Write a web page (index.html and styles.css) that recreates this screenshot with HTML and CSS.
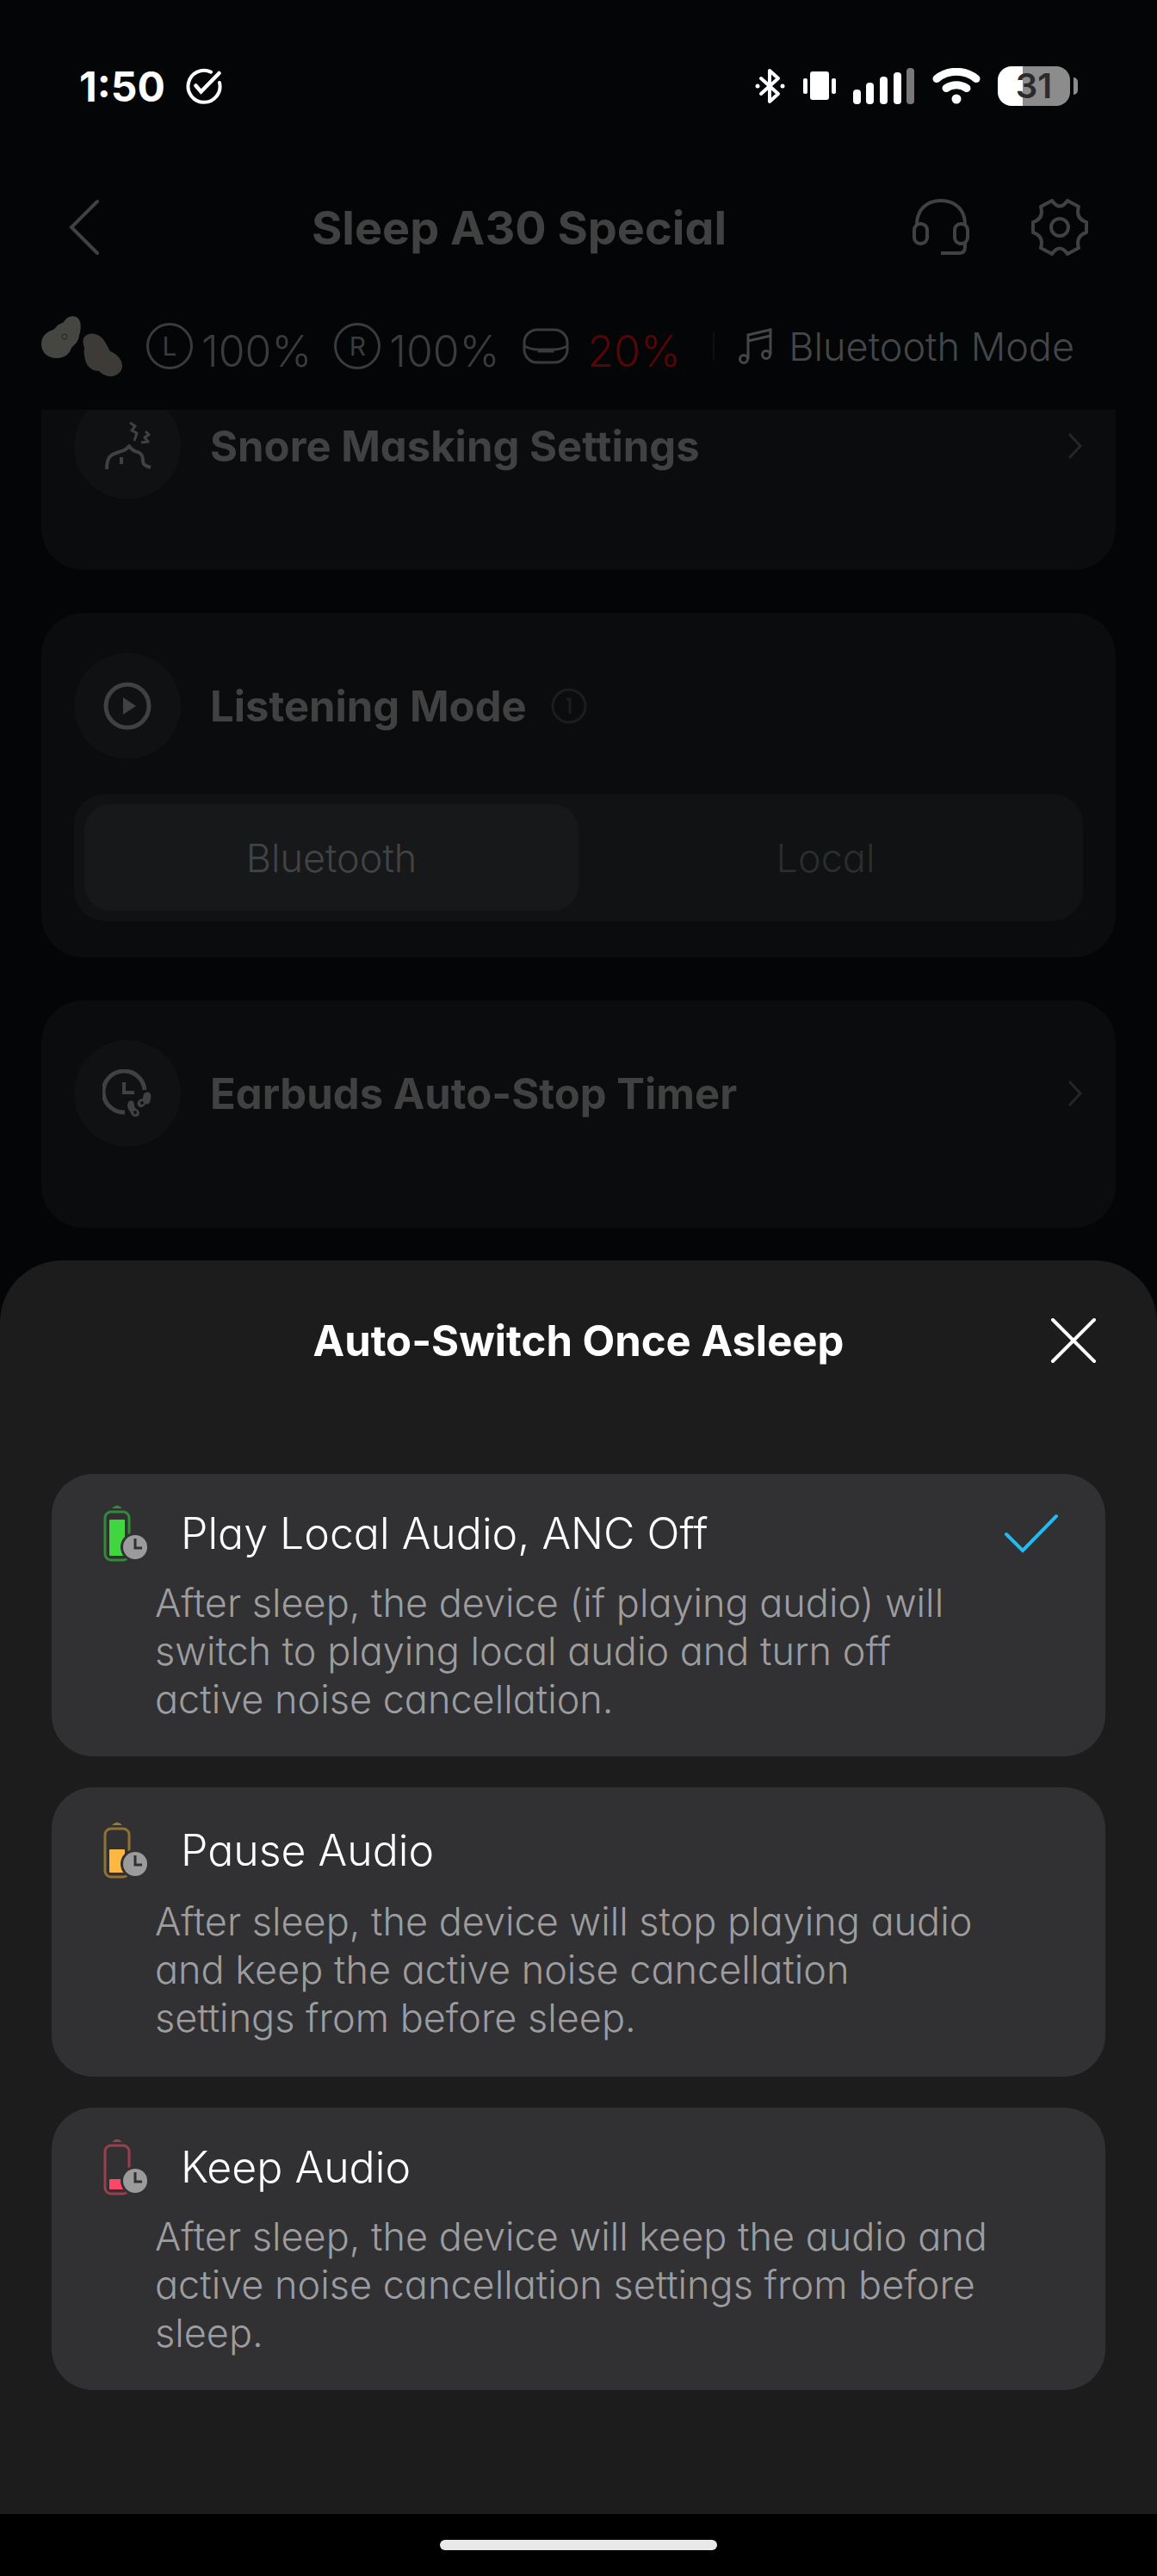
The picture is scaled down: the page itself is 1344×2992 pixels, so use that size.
FILE: index.html
```html
<!DOCTYPE html>
<html lang="en">
<head>
    <meta charset="UTF-8">
    <meta name="viewport" content="width=device-width, initial-scale=1">
    <title>Sleep A30 Special</title>
    <link rel="stylesheet" href="styles.css">
</head>
<body>
    <div class="status-bar">
        <span class="time">1:50</span>
        <svg class="status-check" width="42" height="42" viewBox="0 0 42 42" fill="none" stroke="#fff" stroke-width="4" stroke-linecap="round">
            <path d="M29 4.600A18.500 18.500 0 1 0 39 17"/>
            <path d="M11.500 20.500l6 7L38.500 6" stroke-width="4.500"/>
        </svg>
        <div class="status-icons">
            <svg width="36" height="42" viewBox="0 0 36 42" fill="none" stroke="#fff" stroke-width="4" stroke-linecap="round" stroke-linejoin="round">
                <path d="M7 12l20 18-10 9V3l10 9L7 30"/>
                <circle cx="3" cy="21" r="2.500" fill="#fff" stroke="none"/>
                <circle cx="32" cy="21" r="2.500" fill="#fff" stroke="none"/>
            </svg>
            <svg width="38" height="42" viewBox="0 0 38 42" fill="#fff">
                <rect x="8" y="4" width="22" height="33" rx="3"/>
                <rect x="0" y="12" width="5" height="18" rx="2"/>
                <rect x="33" y="12" width="5" height="18" rx="2"/>
            </svg>
            <svg width="72" height="42" viewBox="0 0 72 42" fill="#fff">
                <rect x="0" y="25" width="9" height="17" rx="4"/>
                <rect x="15" y="17" width="9" height="25" rx="4"/>
                <rect x="31" y="10" width="9" height="32" rx="4"/>
                <rect x="47" y="5" width="9" height="37" rx="4"/>
                <rect x="62" y="0" width="9" height="42" rx="4" fill="#7b7778"/>
            </svg>
            <svg width="56" height="42" viewBox="0 0 56 42" fill="none" stroke="#fff" stroke-width="9" stroke-linecap="round">
                <path d="M5 12.500C18 1.500 38 1.500 51 12.500"/>
                <path d="M16 23.500C23 18.500 33 18.500 40 23.500"/>
                <circle cx="28" cy="36" r="5.500" fill="#fff" stroke="none"/>
            </svg>
            <div class="battery">
                <span class="battery-body">31</span>
                <span class="battery-tip"></span>
            </div>
        </div>
    </div>

    <main class="screen">
        <header class="header">
            <button class="icon-btn" aria-label="Back">
                <svg width="36" height="66" viewBox="0 0 36 66" fill="none" stroke="currentColor" stroke-width="4" stroke-linecap="round">
                    <path d="M33 3L3 33l30 30"/>
                </svg>
            </button>
            <h1>Sleep A30 Special</h1>
            <button class="icon-btn" aria-label="Support">
                <svg width="66" height="66" viewBox="0 0 66 66" fill="none" stroke="currentColor" stroke-width="4">
                    <path d="M5 30C5 12 17 2 33 2s28 10 28 28"/>
                    <rect x="2" y="29" width="15" height="23" rx="7"/>
                    <rect x="49" y="29" width="15" height="23" rx="7"/>
                    <path d="M61 50v6q0 7-7 7H33"/>
                </svg>
            </button>
            <button class="icon-btn" aria-label="Settings">
                <svg width="66" height="66" viewBox="0 0 66 66" fill="none" stroke="currentColor" stroke-width="4" stroke-linejoin="round">
                    <path d="M24 2Q33 15 42 2L55 9Q51 23 64 27V39Q51 43 55 57L42 64Q33 51 24 64L11 57Q15 43 2 39V27Q15 23 11 9Z"/>
                    <circle cx="33" cy="33" r="10"/>
                </svg>
            </button>
        </header>

        <div class="device-row">
            <svg class="buds" width="94" height="72" viewBox="0 0 94 72">
                <path d="M26 8c4-7 12-9 17-4 4 5 3 13 1 20-1 7-5 10-9 14-2 7-8 12-17 12C7 50 0 43 0 34c0-8 4-13 11-16 4-1 5-3 7-5 2-3 5-3 8-5z" fill="#454542"/>
                <path d="M53 23c8-4 16 0 21 8 2 4 4 7 6 11 8 3 14 10 14 17 0 8-8 13-16 12-5-1-8-3-11-6-8 0-14-5-16-13-1-5-2-9-1-14-2-6-3-12 3-15z" fill="#3c3b38"/>
                <circle cx="27" cy="25" r="3" fill="none" stroke="#2a211c"/>
                <circle cx="66" cy="46" r="2" fill="#56322c"/>
            </svg>
            <div class="level">
                <span class="side">L</span>
                <span>100%</span>
            </div>
            <div class="level">
                <span class="side">R</span>
                <span>100%</span>
            </div>
            <div class="level level-case">
                <svg width="54" height="42" viewBox="0 0 54 42" fill="none" stroke="currentColor" stroke-width="3">
                    <rect x="2" y="2" width="50" height="38" rx="15"/>
                    <path d="M2 21q8 4 16 4h18q8 0 16-4M19 25v2h16v-2"/>
                </svg>
                <span class="low">20%</span>
            </div>
            <span class="divider"></span>
            <div class="mode">
                <svg width="40" height="42" viewBox="0 0 40 42" fill="none" stroke="currentColor" stroke-width="3">
                    <path d="M11 36V8l26-6v29M11 15l26-6"/>
                    <circle cx="6" cy="36" r="4.500"/>
                    <circle cx="32" cy="31" r="4.500"/>
                </svg>
                <span>Bluetooth Mode</span>
            </div>
        </div>

        <section class="card card-clipped">
            <div class="card-head">
                <span class="card-icon">
                    <svg width="56" height="56" viewBox="0 0 56 56" fill="none" stroke="currentColor" stroke-width="4" stroke-linejoin="round">
                        <path d="M4 55C4 41 8 38 18 35c7-2 9-3 12-7 3 5 6 6 10 7 5 2 6 5 6 10 0 5 3 6 9 8M21 41v8"/>
                        <path d="M31 1l6 4-4 5 6 3-3 9M49 11l4 4-5 3 4 5-8 1" stroke-width="3"/>
                    </svg>
                </span>
                <h2>Snore Masking Settings</h2>
                <svg class="chevron" width="18" height="32" viewBox="0 0 18 32" fill="none" stroke="#242627" stroke-width="3">
                    <path d="M2 2l13 14L2 30"/>
                </svg>
            </div>
        </section>

        <section class="card">
            <div class="card-head">
                <span class="card-icon">
                    <svg width="56" height="56" viewBox="0 0 56 56" fill="none" stroke="currentColor" stroke-width="5">
                        <circle cx="28" cy="28" r="25"/>
                        <path d="M23 18l15 10-15 10z" fill="currentColor" stroke="none"/>
                    </svg>
                </span>
                <h2>Listening Mode</h2>
                <svg class="info" width="42" height="42" viewBox="0 0 42 42" fill="none" stroke="#1b1d1e" stroke-width="3">
                    <circle cx="21" cy="21" r="19"/>
                    <path d="M18 13h4v17"/>
                </svg>
            </div>
            <div class="segment">
                <button class="segment-btn selected">Bluetooth</button>
                <button class="segment-btn">Local</button>
            </div>
        </section>

        <section class="card card-last">
            <div class="card-head">
                <span class="card-icon">
                    <svg width="58" height="56" viewBox="0 0 58 56" fill="none" stroke="currentColor" stroke-width="5">
                        <path d="M49 24A24 24 0 1 0 26 50"/>
                        <path d="M25 15v12h12" stroke-width="4"/>
                        <path d="M50 27c6-2 7 3 6 7 0 4-3 8-6 6-2 5-7 5-9 2-2-5 3-8 6-8 0-3 1-6 3-7zM31 37c3-2 6 0 6 4 0 3 1 4 4 6 4 4 1 9-4 8-3-1-4-4-5-6-3-3-4-9-1-12z" fill="currentColor" stroke="none"/>
                        <circle cx="46" cy="39" r="2" fill="#111213" stroke="none"/>
                        <circle cx="38" cy="50" r="2" fill="#111213" stroke="none"/>
                    </svg>
                </span>
                <h2>Earbuds Auto-Stop Timer</h2>
                <svg class="chevron" width="18" height="32" viewBox="0 0 18 32" fill="none" stroke="#242627" stroke-width="3">
                    <path d="M2 2l13 14L2 30"/>
                </svg>
            </div>
        </section>
    </main>

    <form class="sheet">
        <div class="sheet-head">
            <h2>Auto-Switch Once Asleep</h2>
            <button type="button" class="close" aria-label="Close">
                <svg width="54" height="54" viewBox="0 0 54 54" fill="none" stroke="#fff" stroke-width="4" stroke-linecap="round">
                    <path d="M3 3l48 48M51 3L3 51"/>
                </svg>
            </button>
        </div>

        <label class="option">
            <input type="radio" name="asleep" value="local" checked>
            <span class="option-head">
                <svg class="option-icon" width="52" height="66" viewBox="0 0 52 66">
                    <path d="M10 4q6-7 12 0z" fill="#338a38"/>
                    <rect x="2" y="8" width="28" height="56" rx="7" fill="none" stroke="#338a38" stroke-width="3"/>
                    <rect x="7" y="17" width="18" height="42" rx="1" fill="#3fd63f"/>
                    <circle cx="37" cy="49" r="17" fill="#313133"/>
                    <circle cx="37" cy="49" r="14" fill="#9b9b9c"/>
                    <path d="M37 39v11h8" fill="none" stroke="#313133" stroke-width="3"/>
                </svg>
                <span class="option-title">Play Local Audio, ANC Off</span>
                <svg class="tick" width="64" height="46" viewBox="0 0 64 46" fill="none" stroke="#1cbcf4" stroke-width="4" stroke-linecap="round">
                    <path d="M3 24l19 19L61 3"/>
                </svg>
            </span>
            <span class="option-text">After sleep, the device (if playing audio) will switch to playing local audio and turn off active noise cancellation.</span>
        </label>

        <label class="option option-roomy">
            <input type="radio" name="asleep" value="pause">
            <span class="option-head">
                <svg class="option-icon" width="52" height="66" viewBox="0 0 52 66">
                    <path d="M10 4q6-7 12 0z" fill="#8f7c3a"/>
                    <rect x="2" y="8" width="28" height="56" rx="7" fill="none" stroke="#917234" stroke-width="3"/>
                    <rect x="7" y="32" width="18" height="27" rx="1" fill="#ffb743"/>
                    <circle cx="37" cy="49" r="17" fill="#313133"/>
                    <circle cx="37" cy="49" r="14" fill="#9b9b9c"/>
                    <path d="M37 39v11h8" fill="none" stroke="#313133" stroke-width="3"/>
                </svg>
                <span class="option-title">Pause Audio</span>
                <svg class="tick" width="64" height="46" viewBox="0 0 64 46" fill="none" stroke="#1cbcf4" stroke-width="4" stroke-linecap="round">
                    <path d="M3 24l19 19L61 3"/>
                </svg>
            </span>
            <span class="option-text">After sleep, the device will stop playing audio and keep the active noise cancellation settings from before sleep.</span>
        </label>

        <label class="option">
            <input type="radio" name="asleep" value="keep">
            <span class="option-head">
                <svg class="option-icon" width="52" height="66" viewBox="0 0 52 66">
                    <path d="M10 4q6-7 12 0z" fill="#99404f"/>
                    <rect x="2" y="8" width="28" height="56" rx="7" fill="none" stroke="#99404f" stroke-width="3"/>
                    <rect x="7" y="47" width="18" height="12" rx="1" fill="#ff4766"/>
                    <circle cx="37" cy="49" r="17" fill="#313133"/>
                    <circle cx="37" cy="49" r="14" fill="#9b9b9c"/>
                    <path d="M37 39v11h8" fill="none" stroke="#313133" stroke-width="3"/>
                </svg>
                <span class="option-title">Keep Audio</span>
                <svg class="tick" width="64" height="46" viewBox="0 0 64 46" fill="none" stroke="#1cbcf4" stroke-width="4" stroke-linecap="round">
                    <path d="M3 24l19 19L61 3"/>
                </svg>
            </span>
            <span class="option-text">After sleep, the device will keep the audio and active noise cancellation settings from before sleep.</span>
        </label>
    </form>

    <div class="nav-bar"><span class="home-bar"></span></div>
</body>
</html>
```
FILE: styles.css
```css
* {
    box-sizing: border-box;
}

body {
    margin: 0;
    min-height: 100vh;
    display: flex;
    flex-direction: column;
    background-color: #030506;
    color: #fff;
    font-family: Inter, "Open Sans", sans-serif;
    /* single-storey a */
    font-feature-settings: "cv11";
}

h1,
h2 {
    margin: 0;
    font-weight: 700;
}

button {
    padding: 0;
    border: none;
    background: none;
    color: inherit;
    font: inherit;
    font-feature-settings: inherit;
    cursor: pointer;
}

svg {
    display: block;
    flex-shrink: 0;
}

/* status bar */
.status-bar {
    display: flex;
    align-items: center;
    height: 200px;
    padding: 0 92px;
}

.time {
    font-size: 48px;
    font-weight: 700;
}

.status-check {
    margin-left: 24px;
}

.status-icons {
    display: flex;
    align-items: center;
    gap: 20px;
    margin-left: auto;
}

.battery {
    display: flex;
    align-items: center;
    gap: 4px;
}

.battery-body {
    width: 84px;
    border-radius: 16px;
    background: linear-gradient(90deg, #fff 34%, #8c8c8c 34%);
    color: #2b2b2b;
    font-size: 40px;
    font-weight: 600;
    line-height: 46px;
    text-align: center;
}

.battery-tip {
    width: 5px;
    height: 20px;
    border-radius: 0 5px 5px 0;
    background-color: #8c8c8c;
}

/* dimmed page behind the sheet */
.screen {
    flex: 1;
    color: #414141;
}

.header {
    display: flex;
    align-items: center;
    height: 128px;
    padding: 0 80px;
}

.header h1 {
    flex: 1;
    padding-left: 30px;
    font-size: 54px;
    text-align: center;
}

.icon-btn + .icon-btn {
    margin-left: 72px;
}

.device-row {
    display: flex;
    align-items: center;
    height: 148px;
    padding: 0 96px 0 48px;
    color: #3a3b3c;
    font-size: 50px;
    font-weight: 300;
}

.buds {
    margin-right: 28px;
}

.level {
    display: flex;
    align-items: center;
    gap: 10px;
    margin-right: 26px;
}

.level span:last-child {
    padding-top: 12px;
}

.side {
    width: 54px;
    border: 3px solid #3a3b3c;
    border-radius: 50%;
    font-size: 30px;
    font-weight: 400;
    line-height: 48px;
    text-align: center;
}

.level-case {
    gap: 22px;
    margin-right: 0;
}

.low {
    color: #580508;
}

.divider {
    width: 2px;
    height: 32px;
    margin-left: auto;
    background-color: #0e1011;
}

.mode {
    display: flex;
    align-items: center;
    gap: 18px;
    margin-left: 28px;
    color: #444648;
    font-size: 45px;
}

.card {
    margin: 0 48px 50px;
    padding: 46px 38px 42px;
    border-radius: 48px;
    background-color: #0a0c0d;
}

.card-head {
    display: flex;
    align-items: center;
    padding-bottom: 40px;
}

/* scrolled under the device row */
.card-clipped {
    padding-top: 0;
    border-radius: 0 0 48px 48px;
    overflow: hidden;
}

.card-clipped .card-head {
    margin-top: -20px;
}

.card-last {
    margin-bottom: 34px;
    padding-bottom: 54px;
}

.card-icon {
    display: flex;
    align-items: center;
    justify-content: center;
    width: 124px;
    height: 124px;
    border-radius: 50%;
    background-color: #0f1112;
}

.card h2 {
    margin-left: 34px;
    font-size: 49px;
}

.chevron {
    margin-left: auto;
}

.info {
    margin-left: 28px;
}

.segment {
    display: flex;
    padding: 12px;
    border-radius: 36px;
    background-color: #101213;
}

.segment-btn {
    flex: 1;
    height: 124px;
    border-radius: 30px;
    color: #2b2d2e;
    font-size: 45px;
    font-weight: 300;
}

.segment-btn.selected {
    background-color: #161819;
    color: #414345;
}

/* bottom sheet */
.sheet {
    display: flex;
    flex-direction: column;
    gap: 36px;
    padding: 0 60px 144px;
    border-radius: 72px 72px 0 0;
    background-color: #1c1c1d;
}

.sheet-head {
    display: flex;
    align-items: center;
    height: 186px;
    margin-bottom: 26px;
    padding-right: 10px;
}

.sheet-head h2 {
    flex: 1;
    padding-left: 64px;
    font-size: 49px;
    text-align: center;
}

.option {
    display: flex;
    flex-direction: column;
    gap: 18px;
    padding: 34px 54px 38px 60px;
    border-radius: 48px;
    background-color: #313133;
    cursor: pointer;
}

.option-roomy {
    gap: 20px;
    padding-top: 38px;
    padding-bottom: 40px;
}

.option input {
    position: absolute;
    opacity: 0;
}

.option-head {
    display: flex;
    align-items: center;
    min-height: 70px;
}

.option-title {
    margin-left: 38px;
    font-size: 50px;
    font-weight: 300;
}

.tick {
    display: none;
    margin-left: auto;
}

.option input:checked + .option-head .tick {
    display: block;
}

.option-text {
    padding: 0 76px 0 60px;
    color: #9d9da0;
    font-size: 45px;
    font-weight: 300;
    line-height: 56px;
}

.nav-bar {
    display: flex;
    justify-content: center;
    padding: 30px 0;
    background-color: #000;
}

.home-bar {
    width: 24%;
    height: 12px;
    border-radius: 6px;
    background-color: #e9e9e9;
}
```
